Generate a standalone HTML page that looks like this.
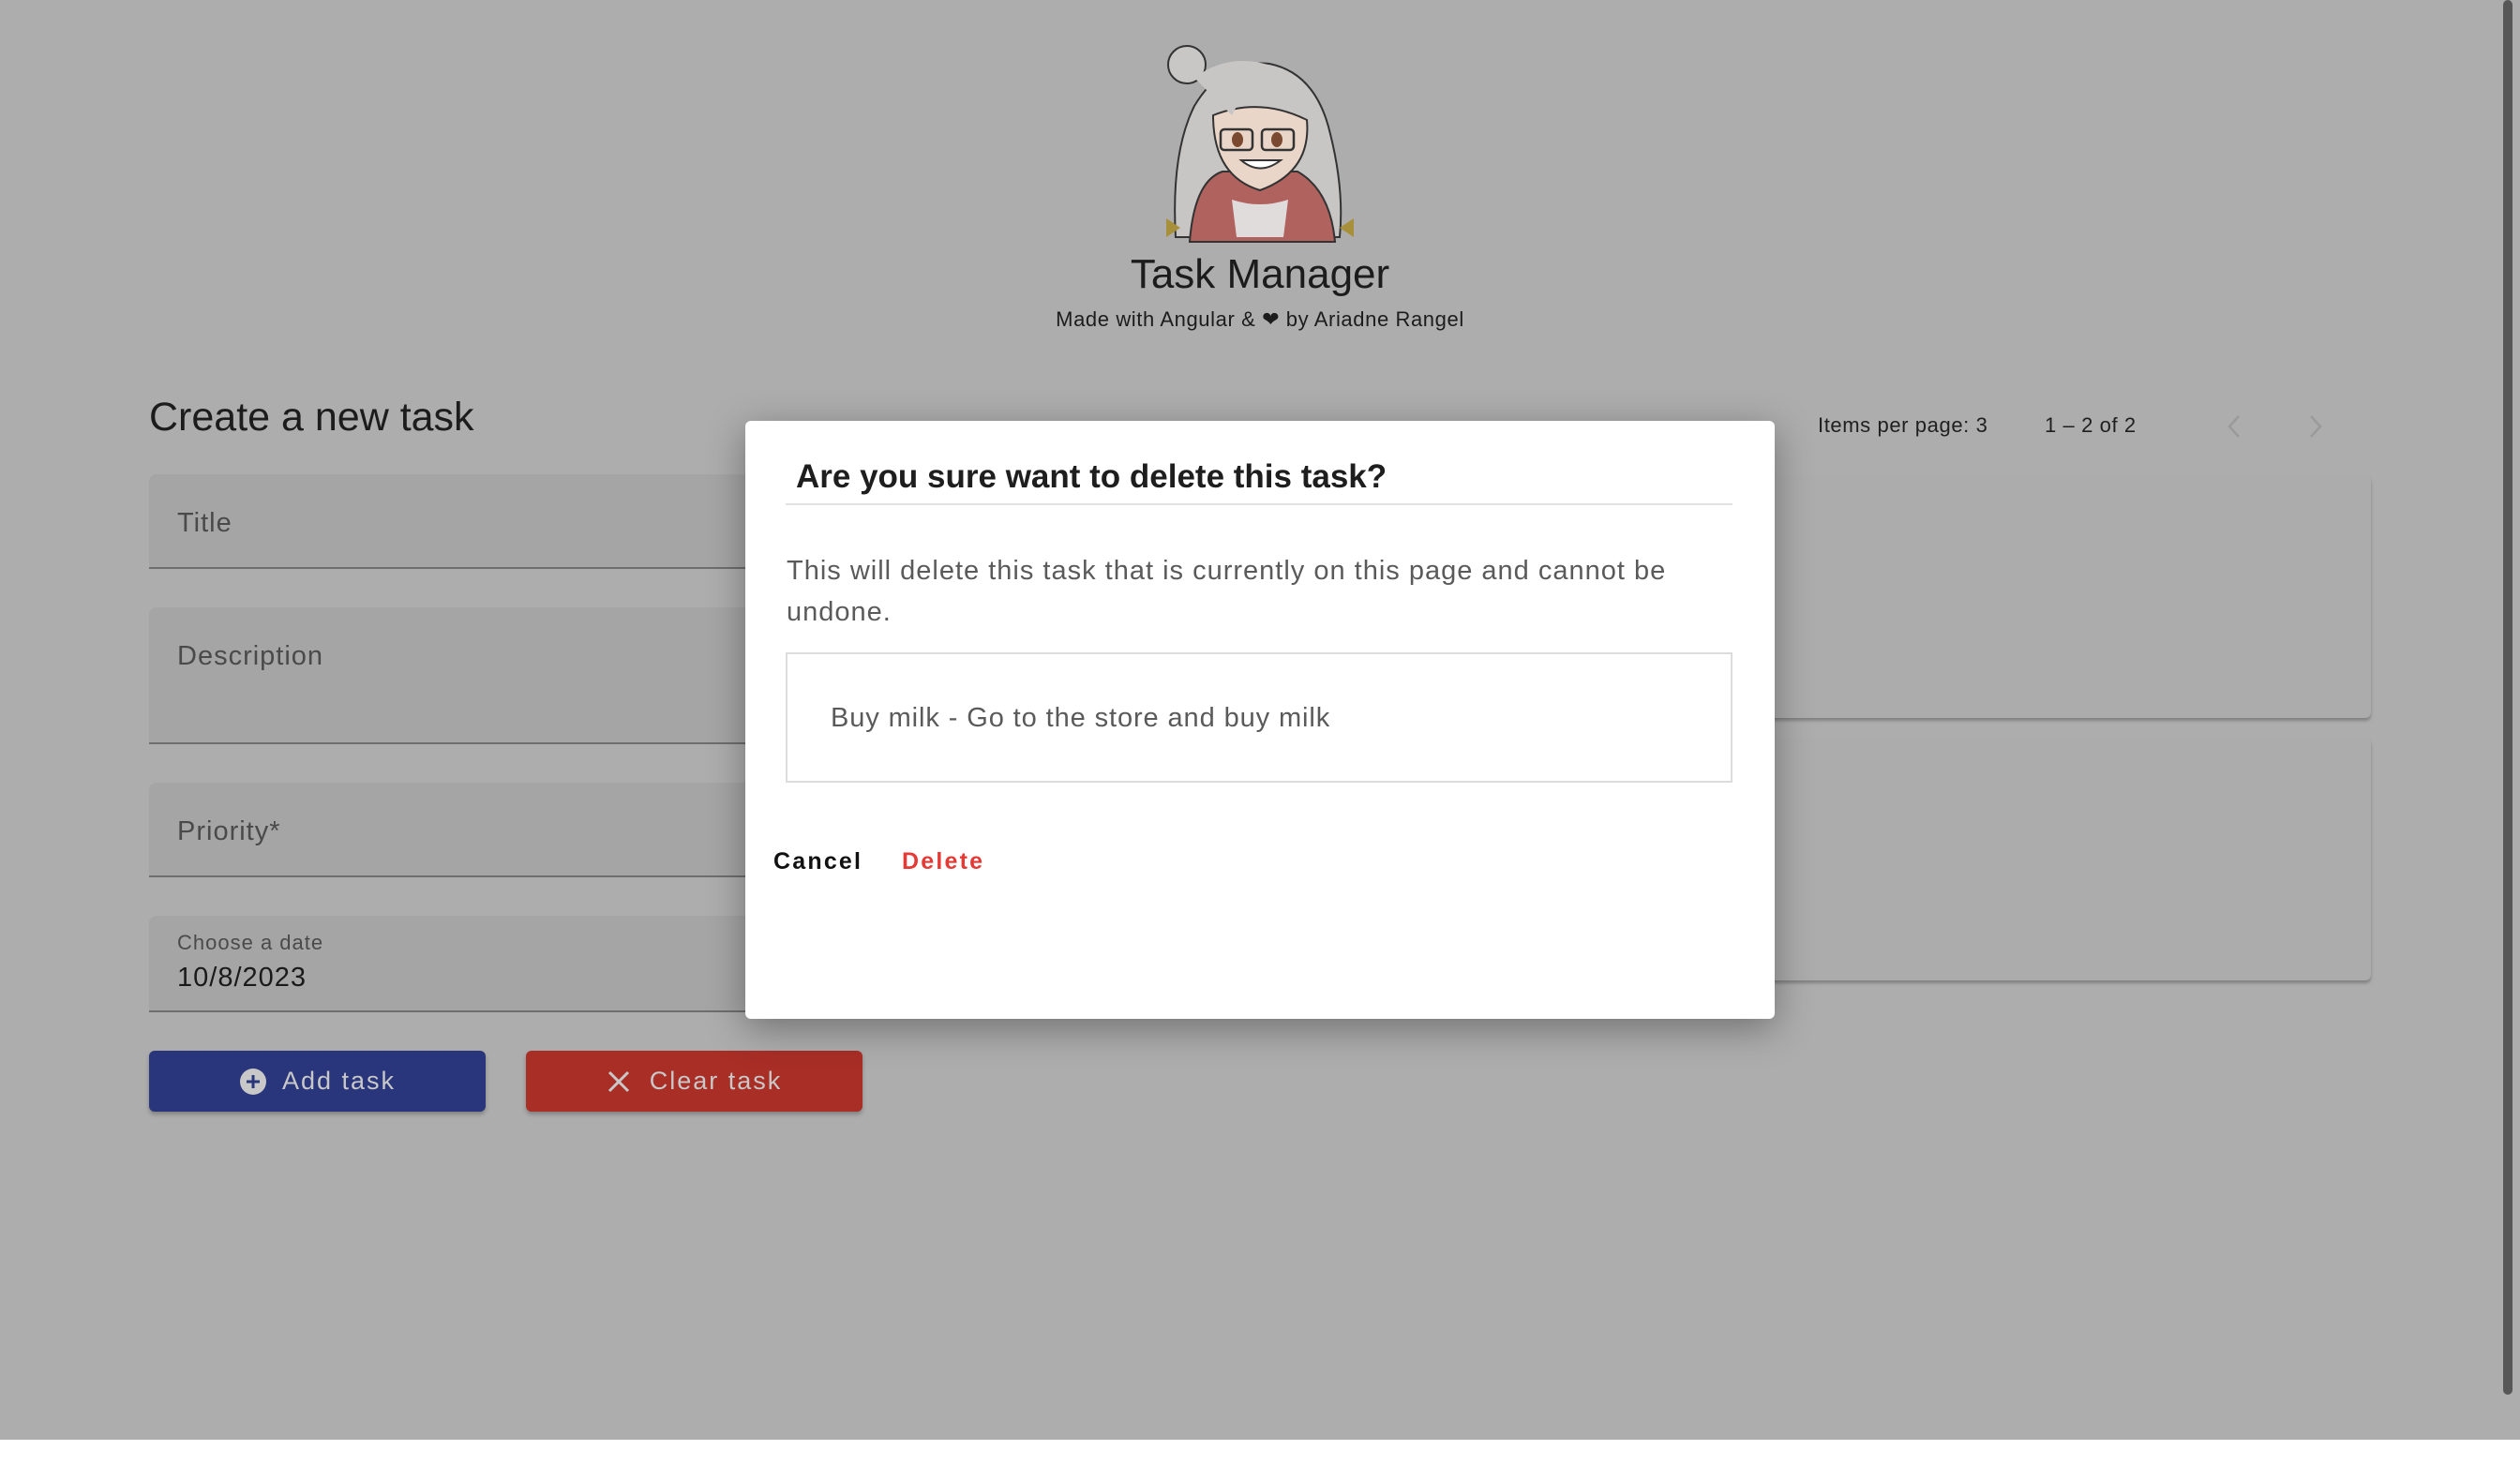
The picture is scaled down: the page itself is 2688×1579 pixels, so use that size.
<!DOCTYPE html>
<html><head><meta charset="utf-8">
<style>
*{box-sizing:border-box;margin:0;padding:0}
body{width:2688px;height:1579px;background:#fff;position:relative;overflow:hidden;font-family:"Liberation Sans",sans-serif}
.bg{position:absolute;left:0;top:0;width:2688px;height:1536px;background:#adadad}
.abs{position:absolute}
.field{position:absolute;left:159px;width:900px;background:#a5a5a5;border-bottom:2px solid #6e6e6e;border-radius:8px 8px 0 0}
.lbl{position:absolute;left:30px;font-size:29px;color:#4a4a4a;letter-spacing:1px}
.card{position:absolute;left:1150px;width:1379px;background:#acacac;border-radius:6px;box-shadow:0 3px 3px rgba(0,0,0,.25)}
.btn{position:absolute;top:1121px;width:359px;height:65px;border-radius:6px;color:#c8c8c8;font-size:27px;letter-spacing:2px;display:flex;align-items:center;justify-content:center;box-shadow:0 3px 4px rgba(0,0,0,.25)}
</style></head><body>
<div class="bg"></div>

<svg class="abs" style="left:1234px;top:43px" width="220" height="218" viewBox="0 0 220 218">
<circle cx="32" cy="26" r="20" fill="#c9c6c6" stroke="#333" stroke-width="2"/>
<path d="M20 210 Q15 120 40 70 Q70 20 120 25 Q170 35 185 100 Q200 160 195 210 Z" fill="#c8c5c5" stroke="#333" stroke-width="2"/>
<path d="M35 215 Q40 150 70 140 L150 140 Q185 160 190 215 Z" fill="#b0625e" stroke="#333" stroke-width="2"/>
<path d="M60 80 Q110 60 160 85 Q165 140 110 160 Q60 145 60 80 Z" fill="#ead6c8" stroke="#333" stroke-width="2"/>
<path d="M80 170 Q110 180 140 170 L135 210 L85 210 Z" fill="#e0dcdc"/>
<rect x="68" y="95" width="34" height="22" rx="4" fill="none" stroke="#333" stroke-width="2.5"/>
<rect x="112" y="95" width="34" height="22" rx="4" fill="none" stroke="#333" stroke-width="2.5"/>
<ellipse cx="86" cy="106" rx="6" ry="8" fill="#7a4a30"/><ellipse cx="128" cy="106" rx="6" ry="8" fill="#7a4a30"/>
<path d="M90 128 Q110 145 132 128 Z" fill="#fff" stroke="#333" stroke-width="2"/>
<path d="M40 40 Q80 10 130 30 Q100 40 80 80 Q60 60 40 40Z" fill="#c8c5c5"/>
<path d="M10 190 L25 200 L10 210Z M210 190 L195 200 L210 210Z" fill="#a8903a"/>
</svg>
<div class="abs" style="left:0;width:2688px;top:268px;text-align:center;font-size:44px;color:#1c1c1c">Task Manager</div>
<div class="abs" style="left:0;width:2688px;top:328px;text-align:center;font-size:22px;color:#1c1c1c;letter-spacing:.6px">Made with Angular &amp; ❤ by Ariadne Rangel</div>

<div class="abs" style="left:159px;top:421px;font-size:43px;color:#1c1c1c">Create a new task</div>
<div class="field" style="top:506px;height:101px"><div class="lbl" style="top:36px">Title</div></div>
<div class="field" style="top:648px;height:146px"><div class="lbl" style="top:36px">Description</div></div>
<div class="field" style="top:835px;height:101px"><div class="lbl" style="top:36px">Priority*</div></div>
<div class="field" style="top:977px;height:103px"><div class="lbl" style="top:16px;font-size:22px">Choose a date</div><div class="lbl" style="top:50px;color:#1a1a1a">10/8/2023</div></div>

<div class="btn" style="left:159px;background:#2a367c"><svg width="30" height="30" viewBox="0 0 30 30" style="margin-right:16px"><circle cx="15" cy="15" r="14" fill="#c8c8c8"/><path d="M15 8v14M8 15h14" stroke="#2a367c" stroke-width="3"/></svg>Add task</div>
<div class="btn" style="left:561px;background:#a82e26"><svg width="26" height="26" viewBox="0 0 26 26" style="margin-right:20px"><path d="M3 3L23 23M23 3L3 23" stroke="#c8c8c8" stroke-width="3"/></svg>Clear task</div>

<div class="abs" style="left:1939px;top:441px;font-size:22px;color:#1f1f1f;letter-spacing:.6px">Items per page: 3</div>
<div class="abs" style="left:2181px;top:441px;font-size:22px;color:#1f1f1f;letter-spacing:.6px">1 – 2 of 2</div>
<svg class="abs" style="left:2373px;top:440px" width="20" height="30"><path d="M15 4L5 15L15 26" fill="none" stroke="#9a9a9a" stroke-width="2.5"/></svg>
<svg class="abs" style="left:2460px;top:440px" width="20" height="30"><path d="M5 4L15 15L5 26" fill="none" stroke="#9a9a9a" stroke-width="2.5"/></svg>

<div class="card" style="top:507px;height:259px"></div>
<div class="card" style="top:787px;height:259px"></div>

<div class="abs" style="left:2670px;top:0;width:10px;height:1488px;background:#575757;border-radius:5px"></div>

<div class="abs" style="left:795px;top:449px;width:1098px;height:638px;background:#fff;border-radius:6px;box-shadow:0 10px 40px rgba(0,0,0,.35)">
<div class="abs" style="left:54px;top:40px;font-size:35px;font-weight:bold;color:#1e1e1e">Are you sure want to delete this task?</div>
<div class="abs" style="left:43px;top:88px;width:1010px;height:2px;background:#e2e2e2"></div>
<div class="abs" style="left:44px;top:138px;width:1010px;font-size:29px;line-height:44px;color:#5a5a5a;letter-spacing:1px">This will delete this task that is currently on this page and cannot be undone.</div>
<div class="abs" style="left:43px;top:247px;width:1010px;height:139px;border:2px solid #dcdcdc"></div>
<div class="abs" style="left:91px;top:301px;font-size:29px;color:#5a5a5a;letter-spacing:.9px">Buy milk - Go to the store and buy milk</div>
<div class="abs" style="left:30px;top:456px;font-size:25px;color:#111;letter-spacing:2.2px;font-weight:bold">Cancel</div>
<div class="abs" style="left:167px;top:456px;font-size:25px;color:#e53935;letter-spacing:2.2px;font-weight:bold">Delete</div>
</div>
</body></html>
